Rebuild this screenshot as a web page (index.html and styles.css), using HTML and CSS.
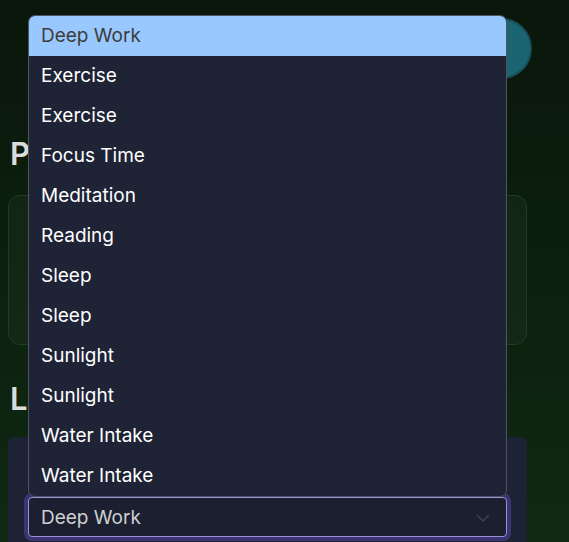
FILE: index.html
```html
<!DOCTYPE html>
<html lang="en">
<head>
<meta charset="utf-8">
<title>Log</title>
<link rel="stylesheet" href="styles.css">
</head>
<body>
<div class="page">
  <div class="fab"></div>
  <h2 class="title title-progress">Progress</h2>
  <section class="card card-progress"></section>
  <h2 class="title title-log">Log Entry</h2>
  <section class="card card-log">
    <div class="select-wrap">
      <div class="select">
        <span class="select-value">Deep Work</span>
        <svg class="chevron" width="14" height="8" viewBox="0 0 14 8"><path d="M1 1l6 6 6-6" fill="none" stroke="#3a4156" stroke-width="1.5"/></svg>
      </div>
      <ul class="menu">
        <li class="opt opt-active">Deep Work</li>
        <li class="opt">Exercise</li>
        <li class="opt">Exercise</li>
        <li class="opt">Focus Time</li>
        <li class="opt">Meditation</li>
        <li class="opt">Reading</li>
        <li class="opt">Sleep</li>
        <li class="opt">Sleep</li>
        <li class="opt">Sunlight</li>
        <li class="opt">Sunlight</li>
        <li class="opt">Water Intake</li>
        <li class="opt">Water Intake</li>
      </ul>
    </div>
  </section>
</div>
</body>
</html>
```
FILE: styles.css
```css
html, body {
  margin: 0;
  height: 100%;
}
body {
  background: linear-gradient(180deg, #0a160b 0%, #0c1f0e 45%, #0f2912 100%);
  font-family: Inter, "Noto Sans", sans-serif;
  overflow: hidden;
}
.page {
  position: relative;
  width: 519px;
  padding: 0 8px;
  padding-top: 134px;
}
.fab {
  position: absolute;
  left: 473px;
  top: 20px;
  width: 57px;
  height: 57px;
  border-radius: 50%;
  background: #1b6472;
  box-shadow: 0 0 0 2px #174e58;
}
.title {
  margin: 0;
  font-size: 31px;
  font-weight: 600;
  color: #dcdcdc;
  line-height: 40px;
  padding-left: 2px;
}
.title-progress {
  margin-bottom: 21px;
}
.card {
  box-sizing: border-box;
  border-radius: 12px;
}
.card-progress {
  height: 150px;
  border: 1px solid #1d3f20;
  background: rgba(255, 255, 255, 0.03);
  margin-bottom: 34px;
}
.title-log {
  margin-bottom: 18px;
}
.card-log {
  background: #1e2235;
  border-radius: 6px 6px 0 0;
  padding: 60px 20px 0;
  height: 105px;
}
.select-wrap {
  position: relative;
}
.select {
  box-sizing: border-box;
  height: 40px;
  border: 1px solid #9b90d6;
  border-radius: 4px;
  background: #1b1f30;
  box-shadow: 0 0 0 4px #3a3472;
  display: flex;
  align-items: center;
  justify-content: space-between;
  padding: 0 16px 0 12px;
}
.select-value {
  font-size: 19px;
  color: #cfcfd2;
}
.chevron {
  display: block;
  margin-top: 2px;
}
.menu {
  position: absolute;
  left: 0;
  right: 0;
  bottom: 100%;
  margin: 0;
  padding: 0;
  list-style: none;
  background: #1e2336;
  border: 1px solid #4e5362;
  border-radius: 7px;
  overflow: hidden;
}
.opt {
  height: 40px;
  line-height: 40px;
  padding-left: 12px;
  font-size: 19px;
  color: #ffffff;
}
.opt-active {
  background: #99c8fe;
  color: #3d3d3d;
}
```
